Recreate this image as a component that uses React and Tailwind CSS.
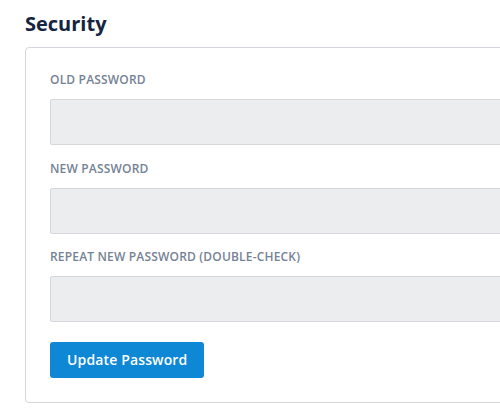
export default function App() {
  const fields = ["Old Password", "New Password", "Repeat New Password (double-check)"];
  const gaps = ["", "mt-[16px]", "mt-[15px]"];

  return (
    <div className="w-[500px] h-[420px] overflow-hidden bg-white font-['Open_Sans',sans-serif]">
      <div className="pl-[25px] pt-[10px]">
        <h2 className="text-[20px] leading-7 font-bold text-[#15243f] mb-[9px]">Security</h2>
        <div className="w-[560px] border border-[#d3d6dc] rounded-[4px] pl-[24px] pr-6 pt-[24px] pb-[24px]">
          {fields.map((label, i) => (
            <div key={label} className={gaps[i]}>
              <label className="block text-[12px] leading-4 font-semibold tracking-[0.015em] uppercase text-[#758295] mb-[11px]">
                {label}
              </label>
              <input
                type="password"
                className="block w-full h-[46px] bg-[#ecedef] border border-[#d5d7db] rounded-[2px] outline-none"
              />
            </div>
          ))}
          <button className="mt-[20px] h-9 px-[17px] rounded-[3px] bg-[#0e88d4] text-white text-[14px] leading-5 font-semibold tracking-[0.01em] flex items-center">
            Update Password
          </button>
        </div>
      </div>
    </div>
  );
}
